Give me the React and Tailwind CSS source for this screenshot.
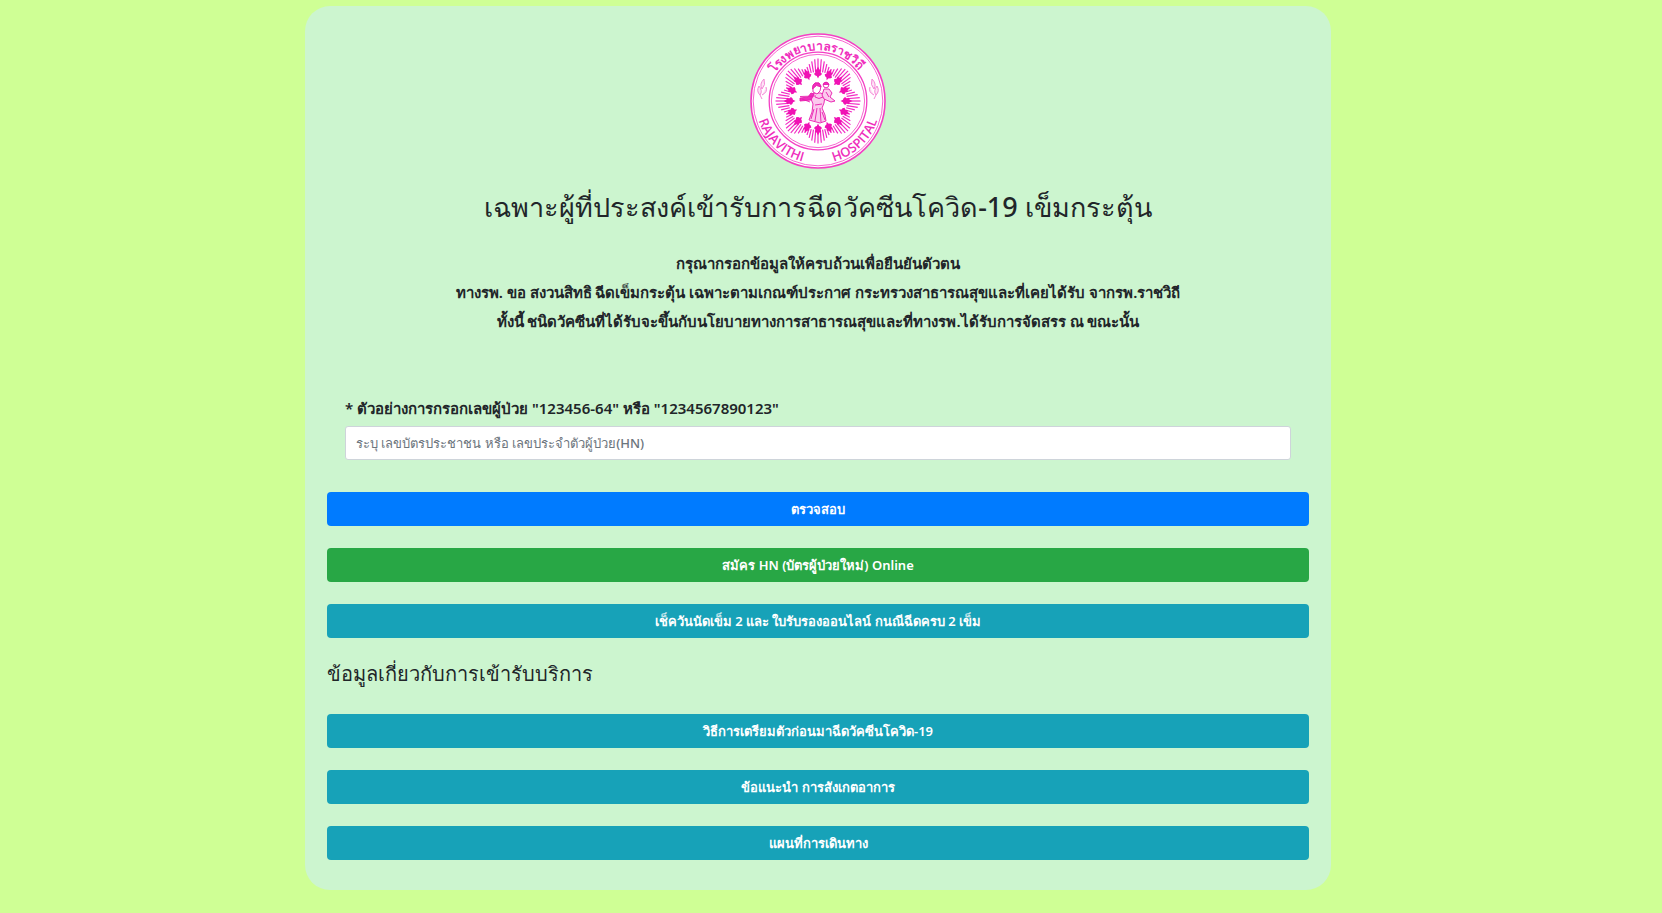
import React from "react";

const PINK = "#f43fc4";

// Rays and flames in the middle of the seal
const rays = Array.from({ length: 80 }, (_, i) => {
    const a = (i / 80) * Math.PI * 2;
    const edge = 34.5 + 8 * Math.pow(Math.abs(Math.cos(4 * a)), 1.6);
    return {
        x1: 68 + Math.cos(a) * 29,
        y1: 68 + Math.sin(a) * 29,
        x2: 68 + Math.cos(a) * edge,
        y2: 68 + Math.sin(a) * edge,
    };
});

const flames = Array.from({ length: 16 }, (_, i) => i * 22.5);

function HospitalLogo() {
    return (
        <svg
            viewBox="0 0 136 136"
            className="w-[136px] h-[136px]"
            role="img"
            aria-label="Rajavithi Hospital"
        >
            <defs>
                <path id="arc-top" d="M 17 68 A 51 51 0 0 1 119 68" />
                <path id="arc-bottom" d="M 5.5 68 A 62.5 62.5 0 0 0 130.5 68" />
            </defs>
            <circle cx="68" cy="68" r="67" fill="#fff" stroke={PINK} strokeWidth="1.6" />
            <circle cx="68" cy="68" r="64.8" fill="none" stroke={PINK} strokeWidth="0.8" />
            <circle cx="68" cy="68" r="48.8" fill="none" stroke={PINK} strokeWidth="1.3" />
            <circle cx="68" cy="68" r="46.6" fill="none" stroke={PINK} strokeWidth="0.8" />

            <g fill="#ef2fbd" fontFamily='"Open Sans", "Noto Sans", sans-serif'>
                <text fontSize="12" fontWeight="600" textAnchor="middle">
                    <textPath href="#arc-top" startOffset="49%">
                        โรงพยาบาลราชวิถี
                    </textPath>
                </text>
                <text fontSize="13" fontWeight="600" textAnchor="middle">
                    <textPath href="#arc-bottom" startOffset="26%">
                        RAJAVITHI
                    </textPath>
                </text>
                <text fontSize="13" fontWeight="600" textAnchor="middle">
                    <textPath href="#arc-bottom" startOffset="74%">
                        HOSPITAL
                    </textPath>
                </text>
            </g>

            <g stroke="#f22bc4" strokeWidth="1.2">
                {rays.map((r, i) => (
                    <line key={i} {...r} />
                ))}
            </g>
            <g fill="#f012b4">
                {flames.map((deg) => (
                    <path
                        key={deg}
                        transform={`rotate(${deg} 68 68)`}
                        d="M68 33.5 L69.4 36.5 L71.2 37 L70.4 39 L72 41 L70.6 42.6 L69.2 43 L68 45.5 L66.8 43 L65.4 42.6 L64 41 L65.6 39 L64.8 37 L66.6 36.5 Z"
                    />
                ))}
            </g>

            {/* Woman carrying a child */}
            <g fill="#fbc9ed" stroke="#e81cae" strokeWidth="0.9" strokeLinejoin="round">
                <path d="M64 60 L71 60 L75 63 L74 70 L72 75 L75 82 L76 88 L70 90 L59 87 L62 79 L63 71 L61 66 Z" />
                <path d="M64 61 L61 67 L50 68 L50 65 L58 64 L61 60 Z" fill="#ef2fbd" />
                <path d="M50 63.5 L66 63 M52 66 L60 69" fill="none" />
                <path d="M63 59 L63 53 L65 50 L69 50 L71 53 L70 58 L67 61 Z" fill="#fff" />
                <path d="M62.5 56 L63 52 L65 50 L69 50 L71 54 L66.5 52.5 Z" fill="#ef2fbd" />
                <path d="M72 62 L74 56 L79 56 L82 60 L80 64 L85 68 L81 69 L74 66 Z" />
                <circle cx="76" cy="52" r="2.8" fill="#fff" />
                <path d="M73.2 51.5 Q76 47 79 51.5 Z" fill="#ef2fbd" />
                <path d="M65 64 Q69 67 73 64 M65 72 L72 71 M64 76 L61 86 M67 75 L65 88 M70 75 L71 89 M72 79 L75 87 M76 59 L79 64" fill="none" />
            </g>

            {/* Side ornaments */}
            <g fill="#fde4f6" stroke="#f586d6" strokeWidth="1">
                <path d="M14 46 Q9 51 12 56 Q16 52 14 46 M9 53 Q6 58 10 62 Q13 58 9 53 M16 54 Q18 59 12 62 M10 62 L12 66" />
                <path d="M122 46 Q127 51 124 56 Q120 52 122 46 M127 53 Q130 58 126 62 Q123 58 127 53 M120 54 Q118 59 124 62 M126 62 L124 66" />
            </g>
        </svg>
    );
}

function MenuButton({ color, type = "button", children }) {
    return (
        <button
            type={type}
            className={`${color} block w-full h-[34px] pt-0.5 rounded-[4px] text-white text-[13px] font-semibold text-center cursor-pointer`}
        >
            {children}
        </button>
    );
}

export default function App() {
    return (
        <div className='min-h-screen bg-[#cfff95] pt-1.5 pb-[22px] pl-4 pr-[42px] text-[#212529] font-["Noto_Sans","Open_Sans",sans-serif]'>
            <main className="max-w-[1026px] mx-auto rounded-[25px] bg-[#ccf5cf] px-[22px] pt-[27px] pb-[30px]">
                <header className="flex flex-col items-center text-center">
                    <HospitalLogo />
                    <h1 className="mt-[18px] text-[27px] leading-10 font-medium">
                        เฉพาะผู้ที่ประสงค์เข้ารับการฉีดวัคซีนโควิด-19 เข็มกระตุ้น
                    </h1>
                    <div className="mt-[22px] text-[15px] leading-[29px] font-semibold">
                        <p>กรุณากรอกข้อมูลให้ครบถ้วนเพื่อยืนยันตัวตน</p>
                        <p>
                            ทางรพ. ขอ สงวนสิทธิ ฉีดเข็มกระตุ้น เฉพาะตามเกณฑ์ประกาศ
                            กระทรวงสาธารณสุขและที่เคยได้รับ จากรพ.ราชวิถี
                        </p>
                        <p>
                            ทั้งนี้ ชนิดวัคซีนที่ได้รับจะขึ้นกับนโยบายทางการสาธารณสุขและที่ทางรพ.ได้รับการจัดสรร
                            ณ ขณะนั้น
                        </p>
                    </div>
                </header>

                <form className="mt-[60px]" onSubmit={(e) => e.preventDefault()}>
                    <div className="px-[18px] mb-8">
                        <label
                            htmlFor="patient-id"
                            className="block mb-1.5 text-[15px] leading-6 font-semibold"
                        >
                            * ตัวอย่างการกรอกเลขผู้ป่วย "123456-64" หรือ "1234567890123"
                        </label>
                        <input
                            id="patient-id"
                            type="text"
                            placeholder="ระบุ เลขบัตรประชาชน หรือ เลขประจำตัวผู้ป่วย(HN)"
                            className="block w-full h-[34px] px-2.5 rounded-[3px] border border-[#ced4da] bg-white text-[13px] font-medium placeholder:text-[#6c757d]"
                        />
                    </div>
                    <MenuButton type="submit" color="bg-[#007bff]">
                        ตรวจสอบ
                    </MenuButton>
                </form>

                <div className="mt-[22px] flex flex-col gap-[22px]">
                    <MenuButton color="bg-[#28a745]">
                        สมัคร HN (บัตรผู้ป่วยใหม่) Online
                    </MenuButton>
                    <MenuButton color="bg-[#17a2b8]">
                        เช็ควันนัดเข็ม 2 และ ใบรับรองออนไลน์ กนณีฉีดครบ 2 เข็ม
                    </MenuButton>
                </div>

                <h2 className="mt-5 mb-6 text-xl leading-8">
                    ข้อมูลเกี่ยวกับการเข้ารับบริการ
                </h2>

                <div className="flex flex-col gap-[22px]">
                    <MenuButton color="bg-[#17a2b8]">
                        วิธีการเตรียมตัวก่อนมาฉีดวัคซีนโควิด-19
                    </MenuButton>
                    <MenuButton color="bg-[#17a2b8]">
                        ข้อแนะนำ การสังเกตอาการ
                    </MenuButton>
                    <MenuButton color="bg-[#17a2b8]">แผนที่การเดินทาง</MenuButton>
                </div>
            </main>
        </div>
    );
}
